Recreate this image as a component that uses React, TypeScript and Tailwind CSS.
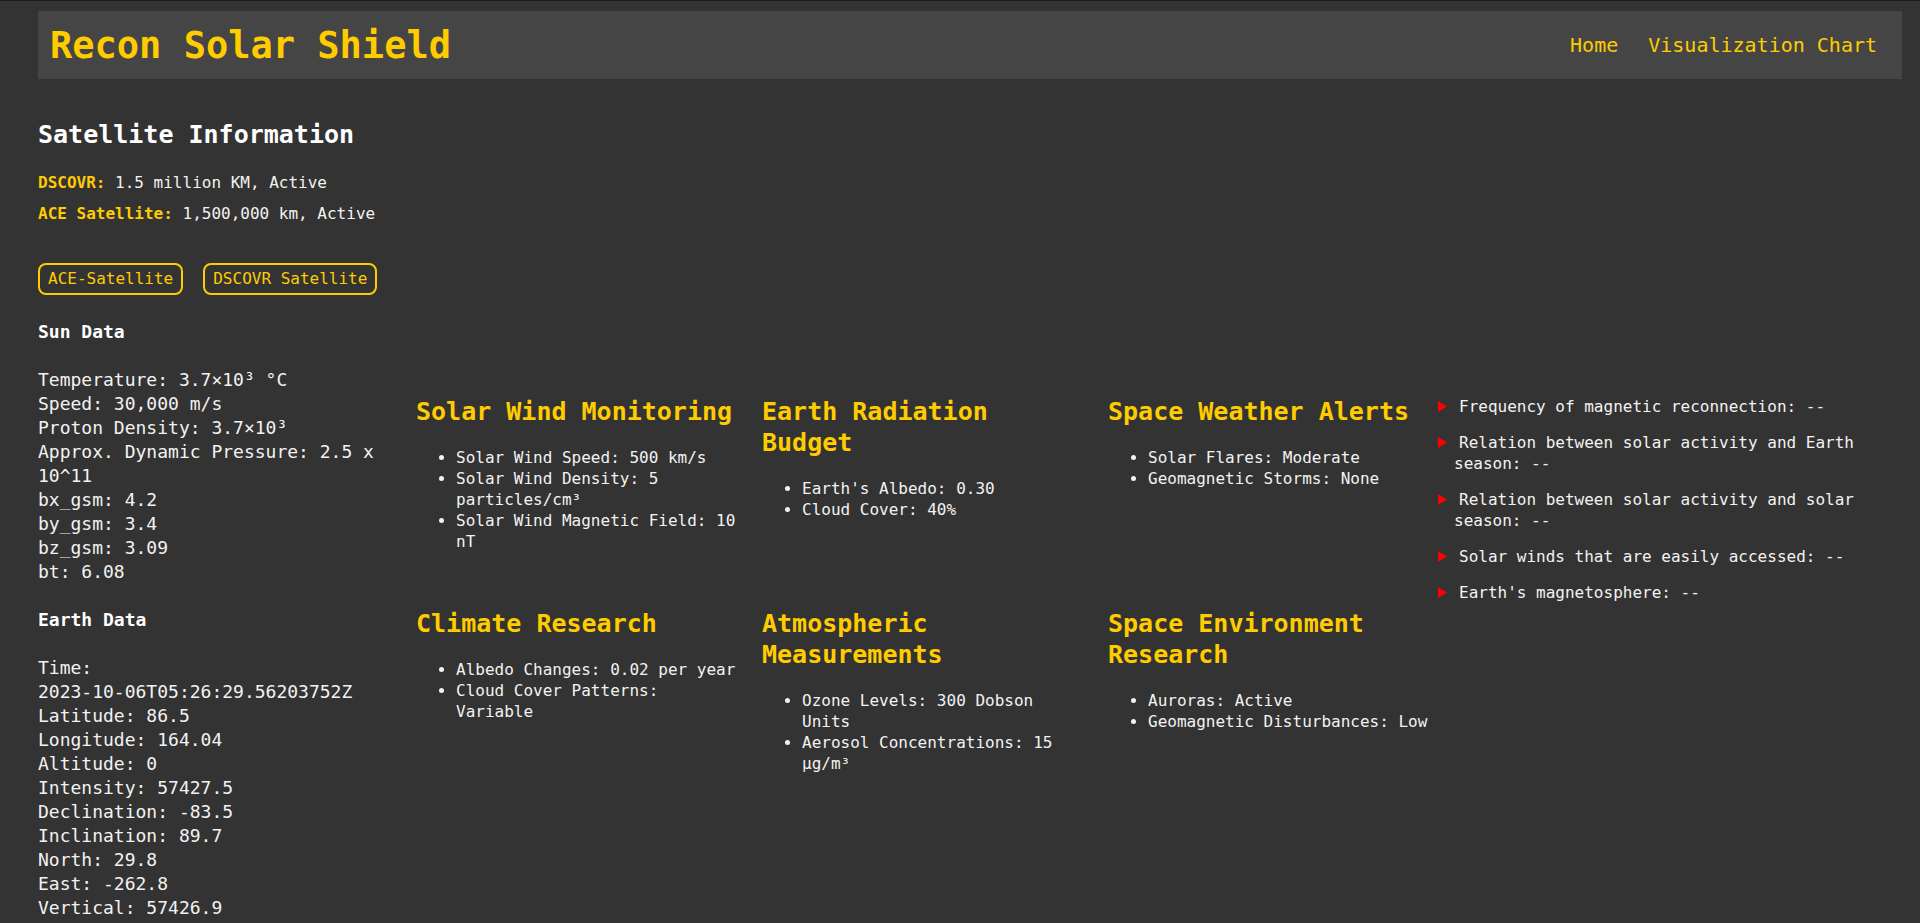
import React from "react";

const sunData = [
  "Temperature: 3.7×10³ °C",
  "Speed: 30,000 m/s",
  "Proton Density: 3.7×10³",
  "Approx. Dynamic Pressure: 2.5 x 10^11",
  "bx_gsm: 4.2",
  "by_gsm: 3.4",
  "bz_gsm: 3.09",
  "bt: 6.08",
];

const earthData = [
  "Latitude: 86.5",
  "Longitude: 164.04",
  "Altitude: 0",
  "Intensity: 57427.5",
  "Declination: -83.5",
  "Inclination: 89.7",
  "North: 29.8",
  "East: -262.8",
  "Vertical: 57426.9",
];

const cards = [
  {
    title: "Solar Wind Monitoring",
    items: [
      "Solar Wind Speed: 500 km/s",
      "Solar Wind Density: 5 particles/cm³",
      "Solar Wind Magnetic Field: 10 nT",
    ],
  },
  {
    title: "Earth Radiation Budget",
    items: ["Earth's Albedo: 0.30", "Cloud Cover: 40%"],
  },
  {
    title: "Space Weather Alerts",
    items: ["Solar Flares: Moderate", "Geomagnetic Storms: None"],
  },
  {
    title: "Climate Research",
    items: ["Albedo Changes: 0.02 per year", "Cloud Cover Patterns: Variable"],
  },
  {
    title: "Atmospheric Measurements",
    items: ["Ozone Levels: 300 Dobson Units", "Aerosol Concentrations: 15 µg/m³"],
  },
  {
    title: "Space Environment Research",
    items: ["Auroras: Active", "Geomagnetic Disturbances: Low"],
  },
];

const findings = [
  "Frequency of magnetic reconnection: --",
  "Relation between solar activity and Earth season: --",
  "Relation between solar activity and solar season: --",
  "Solar winds that are easily accessed: --",
  "Earth's magnetosphere: --",
];

const Arrow = () => (
  <svg
    width="9"
    height="11"
    viewBox="0 0 9 11"
    className="absolute left-0 top-[5px]"
  >
    <polygon points="0,0 9,5.5 0,11" fill="#ff0000" />
  </svg>
);

const App = () => {
  return (
    <div className="min-h-screen bg-[#333333] border-t border-[#1b1b1b] pl-[38px] pr-[18px] pt-[10px] pb-10 text-[#f2f2f2] font-['DejaVu_Sans_Mono','Liberation_Mono',monospace]">
      {/* Header */}
      <header className="h-[68px] bg-[#454545] flex items-center justify-between pl-3 pr-[25px]">
        <h1 className="text-[37px] leading-none font-bold text-[#ffcc00]">Recon Solar Shield</h1>
        <nav className="flex gap-[30px] text-[20px] text-[#ffcc00]">
          <a href="#">Home</a>
          <a href="#">Visualization Chart</a>
        </nav>
      </header>

      {/* Satellite info */}
      <section className="mt-[40px]">
        <h2 className="text-[25px] leading-[31px] font-bold text-white">
          Satellite Information
        </h2>
        <div className="mt-[22px] flex flex-col gap-[10px] text-[16px] leading-[21px]">
          <p>
            <span className="font-bold text-[#ffcc00]">DSCOVR:</span> 1.5 million KM, Active
          </p>
          <p>
            <span className="font-bold text-[#ffcc00]">ACE Satellite:</span> 1,500,000 km, Active
          </p>
        </div>
        <div className="mt-[39px] flex gap-5">
          <button className="h-8 px-2 border-2 border-[#ffcc00] rounded-lg text-[16px] text-[#ffcc00]">
            ACE-Satellite
          </button>
          <button className="h-8 px-2 border-2 border-[#ffcc00] rounded-lg text-[16px] text-[#ffcc00]">
            DSCOVR Satellite
          </button>
        </div>
      </section>

      <div className="mt-[25px] flex items-start">
        {/* Left data column */}
        <div className="w-[340px] shrink-0 text-[18px] leading-6">
          <p className="font-bold text-white">Sun Data</p>
          <div className="mt-6">
            {sunData.map((line) => (
              <p key={line}>{line}</p>
            ))}
          </div>
          <p className="mt-6 font-bold text-white">Earth Data</p>
          <div className="mt-6">
            <p>
              Time: <span className="whitespace-nowrap">2023-10-06T05:26:29.56203752Z</span>
            </p>
            {earthData.map((line) => (
              <p key={line}>{line}</p>
            ))}
          </div>
        </div>

        {/* Cards */}
        <div className="ml-[38px] mt-[76px] grid grid-cols-[repeat(3,322px)] gap-x-6 gap-y-[56px] shrink-0">
          {cards.map((card) => (
            <div key={card.title}>
              <h3 className="text-[25px] leading-[31px] font-bold text-[#ffcc00]">{card.title}</h3>
              <ul className="mt-5 pl-10 list-disc text-[16px] leading-[21px]">
                {card.items.map((item) => (
                  <li key={item}>{item}</li>
                ))}
              </ul>
            </div>
          ))}
        </div>

        {/* Findings list */}
        <ul className="ml-2 mt-[76px] flex-1 flex flex-col gap-[15px] text-[16px] leading-[21px]">
          {findings.map((f) => (
            <li key={f} className="relative pl-4 indent-[5px]">
              <Arrow />
              {f}
            </li>
          ))}
        </ul>
      </div>
    </div>
  );
};

export default App;
